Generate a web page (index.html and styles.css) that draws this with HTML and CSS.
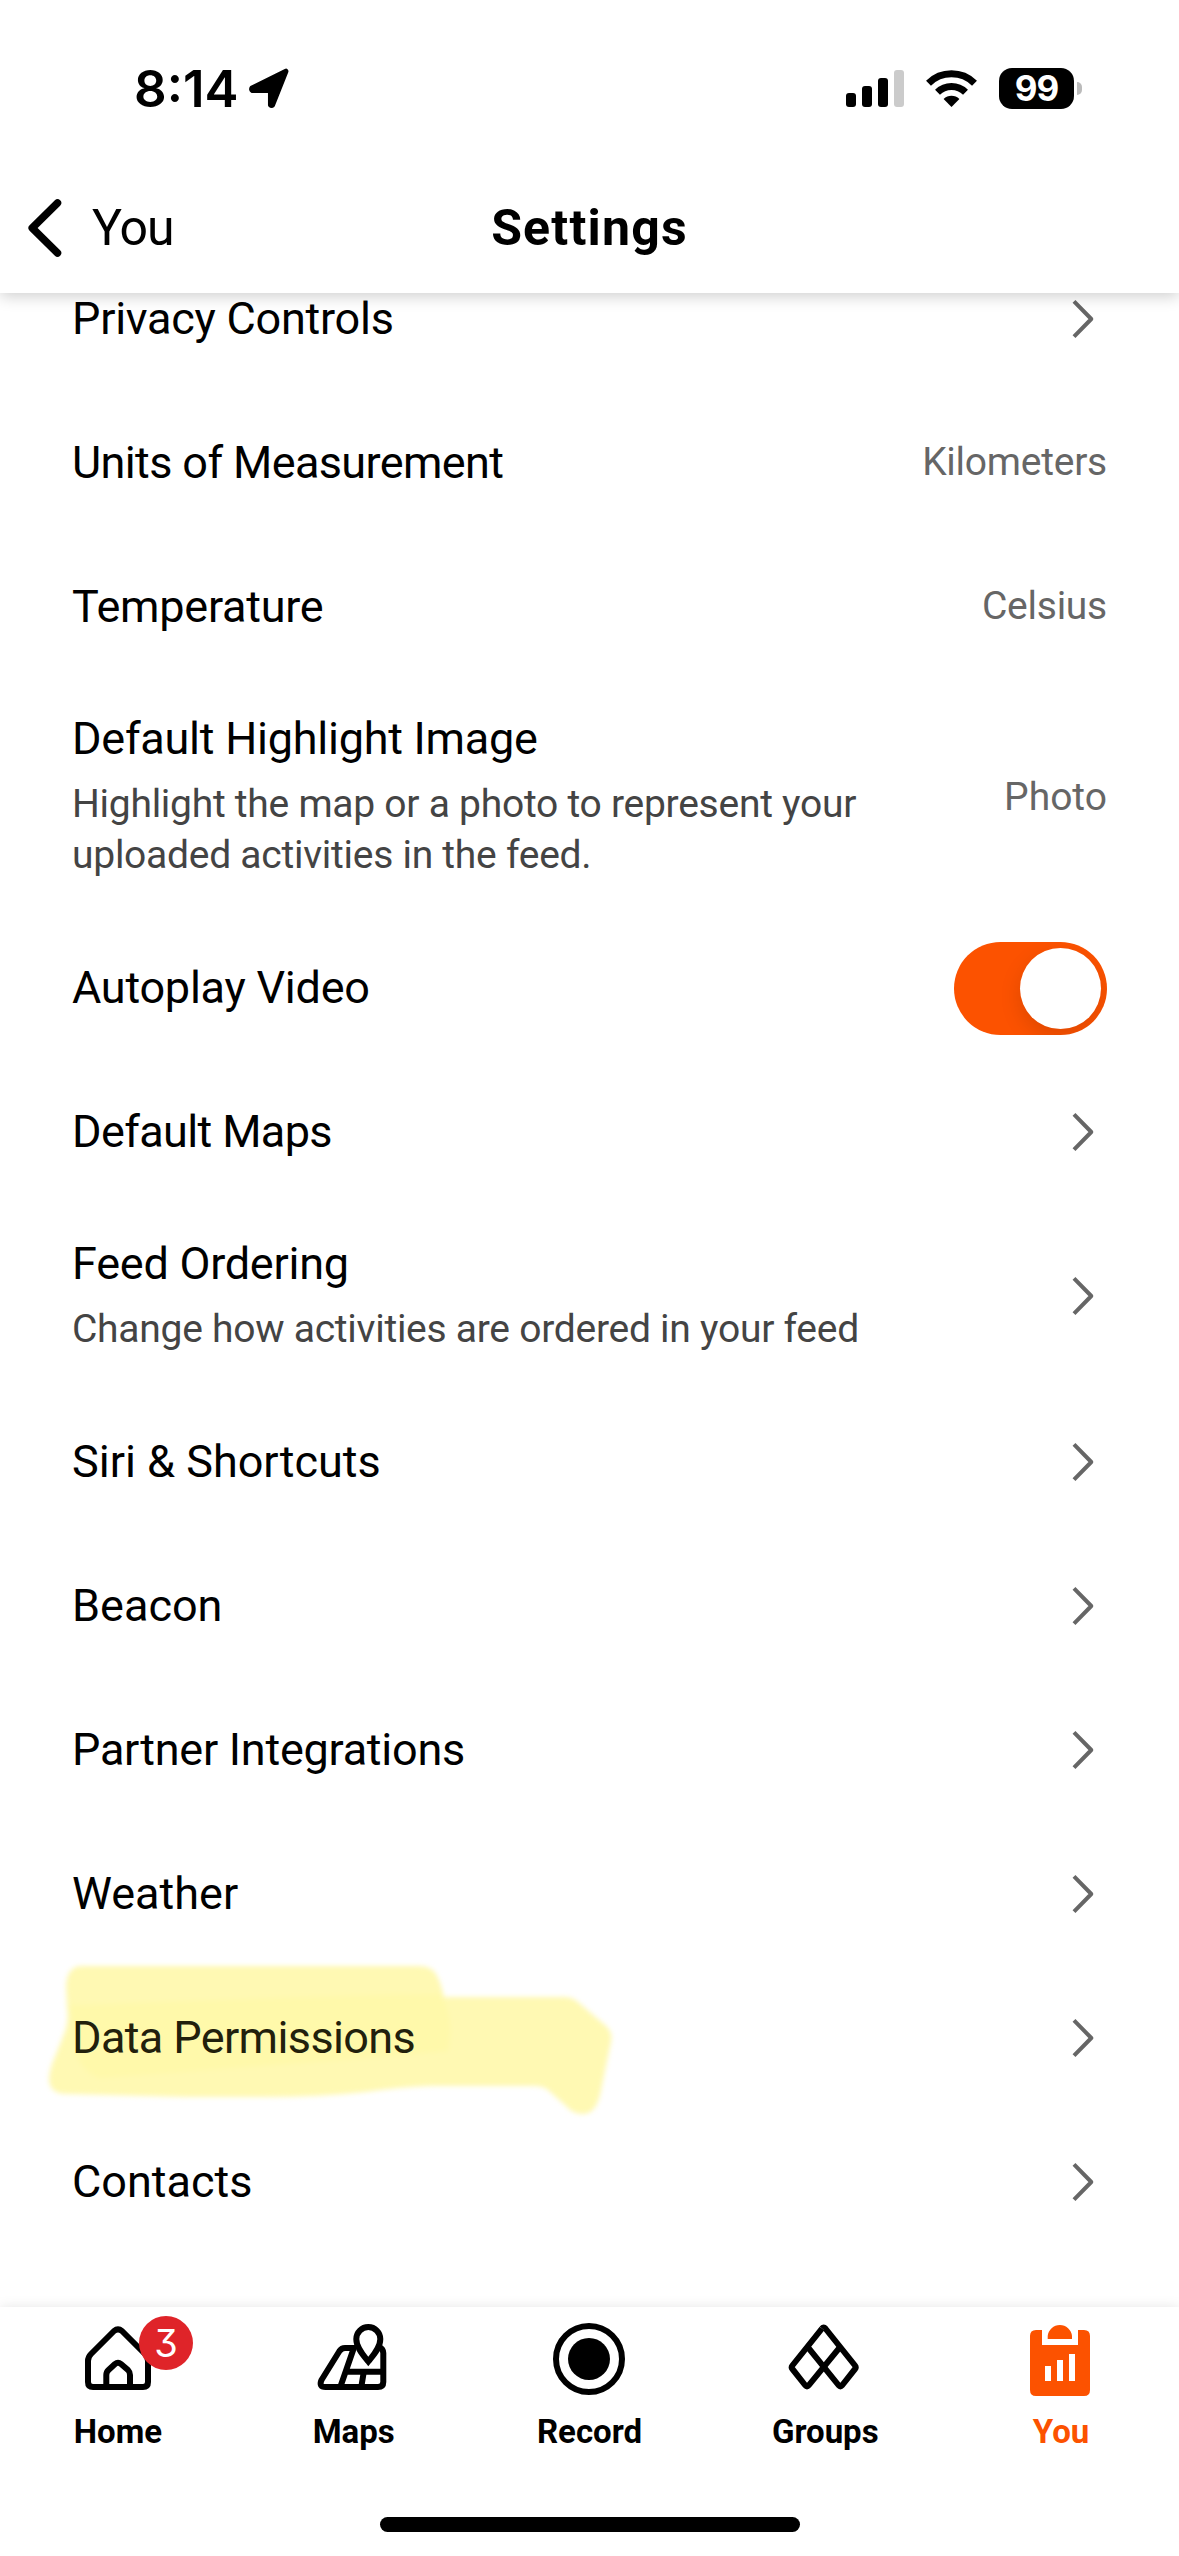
FILE: index.html
```html
<!DOCTYPE html>
<html lang="en">
<head>
  <meta charset="UTF-8">
  <title>Settings</title>
  <link rel="stylesheet" href="styles.css">
</head>
<body>

  <svg class="defs" width="0" height="0">
    <symbol id="chevron" viewBox="0 0 24 42">
      <path d="M3 3.3 L20.3 21 L3 38.7" fill="none" stroke="#666" stroke-width="4" stroke-linejoin="round"/>
    </symbol>
  </svg>

  <div class="screen">

    <header class="top">
      <div class="status-bar">
        <div class="status-left">
          <span class="time">8:14</span>
          <svg class="location" viewBox="0 0 40 40">
            <path d="M3 19.5 L36 3.2 L23 36 Q22 37 21 36 L21 22 L3.5 22 Q2 21 3 19.5Z" fill="#000" stroke="#000" stroke-width="5" stroke-linejoin="round"/>
          </svg>
        </div>
        <div class="status-right">
          <svg class="signal" viewBox="0 0 58 37">
            <rect x="0" y="23" width="10" height="14" rx="3"/>
            <rect x="16" y="16" width="10" height="21" rx="3"/>
            <rect x="32" y="8" width="10" height="29" rx="3"/>
            <rect x="48" y="0" width="10" height="37" rx="3" fill="#cbcbcb"/>
          </svg>
          <svg class="wifi" viewBox="0 0 51 37">
            <g fill="none" stroke="#000" stroke-width="7">
              <path d="M2.5 13.2 A32.8 32.8 0 0 1 48.5 13.2"/>
              <path d="M11.5 22.2 A20 20 0 0 1 39.5 22.2"/>
            </g>
            <path d="M25.5 37 L17.6 29 A11.5 11.5 0 0 1 33.4 29Z"/>
          </svg>
          <div class="battery">
            <span class="battery-level">99</span>
            <span class="battery-cap"></span>
          </div>
        </div>
      </div>

      <div class="nav-bar">
        <a class="back">
          <svg class="back-icon" viewBox="0 0 34 58">
            <path d="M29.5 4 L4.2 29 L29.5 54" fill="none" stroke="#000" stroke-width="7.5" stroke-linecap="round" stroke-linejoin="round"/>
          </svg>
          <span>You</span>
        </a>
        <h1 class="title">Settings</h1>
      </div>
    </header>

    <main class="list">
      <div class="row">
        <span class="label">Privacy Controls</span>
        <svg class="chevron"><use href="#chevron"/></svg>
      </div>
      <div class="row">
        <span class="label tight">Units of Measurement</span>
        <span class="value">Kilometers</span>
      </div>
      <div class="row">
        <span class="label">Temperature</span>
        <span class="value">Celsius</span>
      </div>
      <div class="row row-detail">
        <div class="text">
          <span class="label">Default Highlight Image</span>
          <p class="description">Highlight the map or a photo to represent your<br>uploaded activities in the feed.</p>
        </div>
        <span class="value photo">Photo</span>
      </div>
      <div class="row">
        <span class="label">Autoplay Video</span>
        <span class="toggle"><span class="knob"></span></span>
      </div>
      <div class="row">
        <span class="label tight">Default Maps</span>
        <svg class="chevron"><use href="#chevron"/></svg>
      </div>
      <div class="row row-detail">
        <div class="text">
          <span class="label">Feed Ordering</span>
          <p class="description">Change how activities are ordered in your feed</p>
        </div>
        <svg class="chevron"><use href="#chevron"/></svg>
      </div>
      <div class="row">
        <span class="label wide">Siri &amp; Shortcuts</span>
        <svg class="chevron"><use href="#chevron"/></svg>
      </div>
      <div class="row">
        <span class="label wide">Beacon</span>
        <svg class="chevron"><use href="#chevron"/></svg>
      </div>
      <div class="row">
        <span class="label">Partner Integrations</span>
        <svg class="chevron"><use href="#chevron"/></svg>
      </div>
      <div class="row">
        <span class="label wide">Weather</span>
        <svg class="chevron"><use href="#chevron"/></svg>
      </div>
      <div class="row marked">
        <!-- highlighter stroke -->
        <svg class="marker" viewBox="0 0 590 170">
          <path d="M26 30 Q27 10 42 10 H379 Q391 10 396 18 Q401 27 404 41 H524 Q532 41 538 46 L566 70 Q573 76 571 86 L560 139 Q555 159 542 158 Q533 158 526 150 L508 134 Q503 130 494 130 H392 Q360 131 325 136 Q280 141 225 141 H145 L27 138 Q10 138 9 124 Q9 117 12 108 L24 78 Q29 66 27 52Z" fill="#fff9b3"/>
          <path d="M30 50 Q200 42 400 38 Q415 60 408 95 Q230 110 60 122 Q40 116 34 90Z" fill="#fff8a4" opacity=".6"/>
        </svg>
        <span class="label tight">Data Permissions</span>
        <svg class="chevron"><use href="#chevron"/></svg>
      </div>
      <div class="row">
        <span class="label wide">Contacts</span>
        <svg class="chevron"><use href="#chevron"/></svg>
      </div>
    </main>

    <nav class="tab-bar">
      <div class="tabs">
        <a class="tab">
          <svg class="tab-icon" viewBox="0 0 72 72">
            <path d="M6 38 Q6 34 9 31 L32 8 Q36 4.8 40 8 L63 31 Q66 34 66 38 V59 Q66 64 61 64 H11 Q6 64 6 59Z"/>
            <path d="M24.3 64 V52 Q24.3 49 26.5 47 L33 41 Q36 38.5 39 41 L46 47 Q48 49 48 52 V64"/>
          </svg>
          <span class="badge">3</span>
          <span class="tab-label">Home</span>
        </a>
        <a class="tab">
          <svg class="tab-icon" viewBox="0 0 72 72">
            <path d="M38 25 H27 Q23.5 25 21.5 28 L3.5 57 Q0.5 64 7.5 64 H60 Q65.3 64 65.3 59 V30 Q65.3 26 61 24"/>
            <path d="M50.3 38.5 C46 33 38.3 25 38.3 16 A12 12 0 0 1 62.3 16 C62.3 25 54.6 33 50.3 38.5Z" stroke-linejoin="miter"/>
            <path d="M35.5 26 L22.3 64 M29 48.7 H65 M45.6 50 L43.3 64"/>
          </svg>
          <span class="tab-label">Maps</span>
        </a>
        <a class="tab">
          <svg class="tab-icon" viewBox="0 0 72 72">
            <circle cx="36" cy="36" r="33"/>
            <circle cx="36" cy="36" r="21" fill="#000" stroke="none"/>
          </svg>
          <span class="tab-label">Record</span>
        </a>
        <a class="tab">
          <svg class="tab-icon" viewBox="0 0 72 72">
            <path d="M33 5.5 Q34.7 3.5 36.4 5.5 L66 42.5 Q67.4 44.3 66 46 L53 62.5 Q51.4 64.5 49.8 62.5 L18.4 23.7"/>
            <path d="M33 5.5 L3.4 42.5 Q2 44.3 3.4 46 L16.4 62.5 Q18 64.5 19.6 62.5 L51.4 23.7"/>
          </svg>
          <span class="tab-label">Groups</span>
        </a>
        <a class="tab active">
          <svg class="tab-icon solid" viewBox="0 0 72 72">
            <path d="M11 7 H17 V22 H53 V7 H59 Q65 7 65 13 V67 Q65 73 59 73 H11 Q5 73 5 67 V13 Q5 7 11 7Z"/>
            <path d="M22.7 16 V13 A12.2 12 0 0 1 47 13 V16Z"/>
            <path d="M20 43 h6 v15 h-6z M32 37 h6 v21 h-6z M44 31 h6 v27 h-6z" fill="#fff"/>
          </svg>
          <span class="tab-label">You</span>
        </a>
      </div>
      <div class="home-indicator"></div>
    </nav>

  </div>

</body>
</html>
```
FILE: styles.css
```css
* {
  margin: 0;
  padding: 0;
  box-sizing: border-box;
}

body {
  background: #fff;
  font-family: Roboto, sans-serif;
  color: #000;
}

.screen {
  width: 1179px;
  height: 2556px;
  display: flex;
  flex-direction: column;
  overflow: hidden;
}

.defs {
  display: block;
}

/* header */
.top {
  position: relative;
  z-index: 2;
  height: 293px;
  flex-shrink: 0;
  background: #fff;
  box-shadow: 0 3px 15px rgba(0, 0, 0, 0.2);
}

.status-bar {
  height: 176px;
  padding: 0 97px 0 134px;
  display: flex;
  justify-content: space-between;
  align-items: center;
}

.status-left,
.status-right {
  display: flex;
  align-items: center;
}

.time {
  font-family: Inter, sans-serif;
  font-size: 51px;
  font-weight: 600;
}

.location {
  width: 41px;
  height: 41px;
  margin-left: 11px;
}

.signal {
  width: 58px;
  height: 37px;
}

.wifi {
  width: 51px;
  height: 37px;
  margin-left: 22px;
}

.battery {
  display: flex;
  align-items: center;
  margin-left: 22px;
}

.battery-level {
  width: 75px;
  height: 41px;
  border-radius: 13px;
  background: #000;
  color: #fff;
  font-family: Inter, sans-serif;
  font-size: 35px;
  font-weight: 700;
  line-height: 41px;
  letter-spacing: -1px;
  text-align: center;
}

.battery-cap {
  width: 5px;
  height: 13px;
  margin-left: 3px;
  border-radius: 0 5px 5px 0;
  background: #bbb;
}

.nav-bar {
  height: 104px;
  padding: 0 28px;
  display: grid;
  grid-template-columns: 1fr auto 1fr;
  align-items: center;
}

.back {
  display: flex;
  align-items: center;
  gap: 30px;
  font-size: 50px;
  letter-spacing: -1px;
}

.back-icon {
  width: 34px;
  height: 58px;
}

.title {
  font-size: 50px;
  font-weight: 700;
  letter-spacing: 1.2px;
}

/* list, scrolled a little under the header */
.list {
  flex: 1;
  margin-top: -46px;
}

.row {
  height: 144px;
  padding: 0 72px;
  display: flex;
  justify-content: space-between;
  align-items: center;
}

.row-detail {
  height: auto;
  padding-top: 33px;
  padding-bottom: 35px;
}

.label {
  display: block;
  font-size: 45px;
  line-height: 54px;
  letter-spacing: -0.25px;
}

.label.tight {
  letter-spacing: -0.62px;
}

.label.wide {
  letter-spacing: 0;
}

.description {
  margin-top: 13px;
  font-size: 39px;
  line-height: 51px;
  letter-spacing: -0.26px;
  color: #444;
}

.value {
  padding-bottom: 3px;
  font-size: 39px;
  letter-spacing: -0.25px;
  color: #666;
}

.value.photo {
  padding-bottom: 0;
  letter-spacing: 0;
}

.chevron {
  width: 24px;
  height: 42px;
  margin-right: 12px;
}

.toggle {
  width: 153px;
  height: 93px;
  padding: 6px;
  border-radius: 47px;
  background: #fc5200;
  display: flex;
  justify-content: flex-end;
  overflow: hidden;
}

.knob {
  width: 81px;
  height: 81px;
  border-radius: 50%;
  background: #fff;
  box-shadow: 0 8px 22px rgba(0, 0, 0, 0.12);
}

.marked {
  position: relative;
}

.marked .label {
  position: relative;
  color: #22200c;
}

.marker {
  position: absolute;
  left: 40px;
  top: -10px;
  width: 590px;
  height: 170px;
  filter: blur(2.5px);
}

/* bottom tabs */
.tab-bar {
  position: relative;
  height: 249px;
  background: #fff;
  box-shadow: 0 0 12px rgba(0, 0, 0, 0.1);
}

.tabs {
  height: 210px;
  display: grid;
  grid-template-columns: repeat(5, 1fr);
}

.tab {
  position: relative;
  padding-top: 16px;
  display: flex;
  flex-direction: column;
  align-items: center;
}

.tab-icon {
  width: 72px;
  height: 72px;
  overflow: visible;
  fill: none;
  stroke: #000;
  stroke-width: 6;
  stroke-linejoin: round;
}

.tab-icon.solid {
  fill: #fc5200;
  stroke: none;
}

.tab-label {
  margin-top: 17px;
  font-size: 33px;
  font-weight: 700;
  line-height: 40px;
}

.active {
  color: #fc5200;
}

.badge {
  position: absolute;
  top: 9px;
  left: 139px;
  width: 54px;
  height: 54px;
  border-radius: 50%;
  background: #df2429;
  color: #fff;
  font-family: Inter, sans-serif;
  font-feature-settings: "cv09";
  font-size: 38px;
  line-height: 54px;
  text-align: center;
}

.home-indicator {
  width: 420px;
  height: 15px;
  margin: 0 auto;
  border-radius: 8px;
  background: #000;
}
```
